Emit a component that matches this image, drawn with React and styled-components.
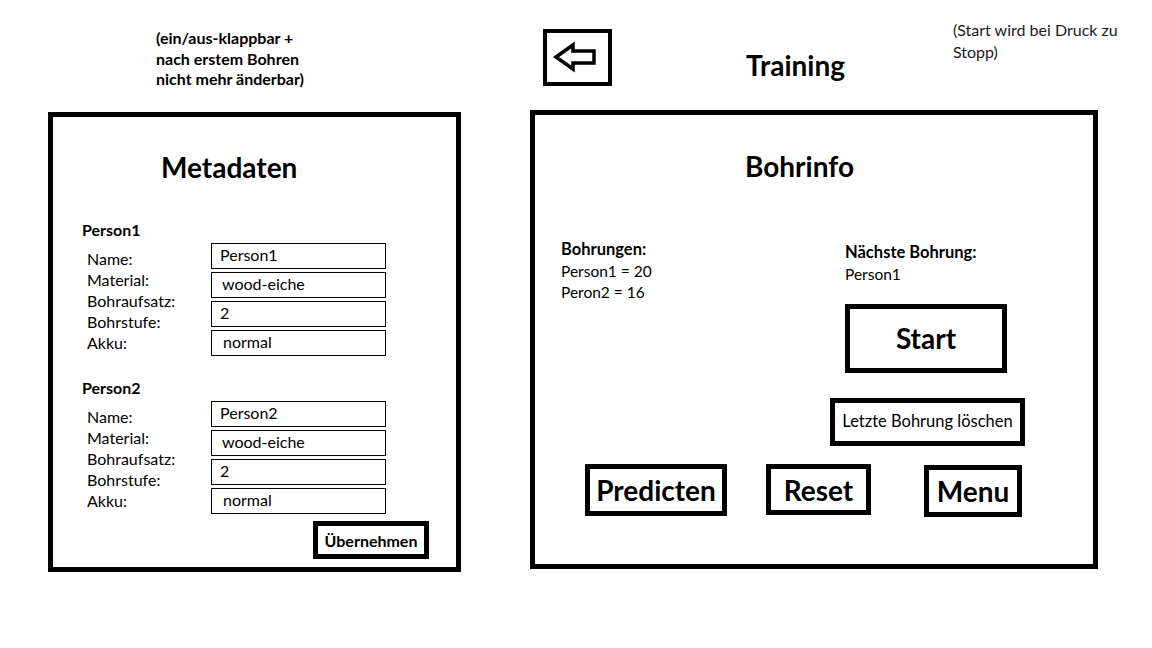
import React from 'react'
import styled, { createGlobalStyle } from 'styled-components'

const GlobalStyle = createGlobalStyle`
    html, body {
        margin: 0;
        padding: 0;
        background: #fff;
    }
    body {
        font-family: Lato, "Open Sans", "Liberation Sans", sans-serif;
        color: #000;
    }
`

const persons = [
    { name: 'Person1', fields: [{ v: 'Person1', x: 8 }, { v: 'wood-eiche', x: 10 }, { v: '2', x: 8 }, { v: 'normal', x: 11 }] },
    { name: 'Person2', fields: [{ v: 'Person2', x: 8 }, { v: 'wood-eiche', x: 10 }, { v: '2', x: 8 }, { v: 'normal', x: 11 }] },
]

const labels = ['Name:', 'Material:', 'Bohraufsatz:', 'Bohrstufe:', 'Akku:']

function BackArrow() {
    return (
        <svg width="61" height="49" viewBox="0 0 61 49">
            <polygon
                points="9,24 26,12 26,18 47,18 47,30 26,30 26,36"
                fill="none"
                stroke="#000"
                strokeWidth="3.5"
                strokeLinejoin="miter"
            />
        </svg>
    )
}

function PersonBlock({ person, first }) {
    return (
        <Person first={first}>
            <PersonName>{person.name}</PersonName>
            <FieldGrid>
                <Labels>
                    {labels.map(l => <div key={l}>{l}</div>)}
                </Labels>
                <Fields>
                    {person.fields.map((f, i) => (
                        <Field key={i} $pad={f.x}>{f.v}</Field>
                    ))}
                </Fields>
            </FieldGrid>
        </Person>
    )
}

export default function App() {
    return (
        <Page>
            <GlobalStyle />
            <LeftColumn>
                <LeftHeader>
                    <BoldNote>
                        (ein/aus-klappbar +<br />
                        nach erstem Bohren<br />
                        nicht mehr änderbar)
                    </BoldNote>
                </LeftHeader>
                <Panel $height={460}>
                    <PanelTitle $left={108} $top={33}>Metadaten</PanelTitle>
                    {persons.map((p, i) => (
                        <PersonBlock key={p.name} person={p} first={i === 0} />
                    ))}
                    <ApplyRow>
                        <ApplyButton>Übernehmen</ApplyButton>
                    </ApplyRow>
                </Panel>
            </LeftColumn>

            <RightColumn>
                <RightHeader>
                    <BackButton><BackArrow /></BackButton>
                    <PageTitle>Training</PageTitle>
                    <Note>
                        (Start wird bei Druck zu<br />
                        Stopp)
                    </Note>
                </RightHeader>
                <Panel $height={459}>
                    <PanelTitle $left={210} $top={34}>Bohrinfo</PanelTitle>
                    <InfoRow>
                        <InfoBlock>
                            <InfoHead>Bohrungen:</InfoHead>
                            <div>Person1 = 20</div>
                            <div>Peron2 = 16</div>
                        </InfoBlock>
                        <ActionColumn>
                            <NextInfo>
                                <InfoHead>Nächste Bohrung:</InfoHead>
                                <div>Person1</div>
                            </NextInfo>
                            <StartButton>Start</StartButton>
                            <DeleteButton>Letzte Bohrung löschen</DeleteButton>
                        </ActionColumn>
                    </InfoRow>
                    <ButtonRow>
                        <BigButton $w={142} $h={52} $ml={50}>Predicten</BigButton>
                        <BigButton $w={105} $h={51} $ml={39}>Reset</BigButton>
                        <BigButton $w={98} $h={52} $ml={53} $mt={1}>Menu</BigButton>
                    </ButtonRow>
                </Panel>
            </RightColumn>
        </Page>
    )
}

const Page = styled.div`
    width: 1152px;
    height: 648px;
    display: flex;
    align-items: flex-start;
    overflow: hidden;
`

const LeftColumn = styled.div`
    margin-left: 48px;
    width: 413px;
    flex-shrink: 0;
    display: flex;
    flex-direction: column;
`

const LeftHeader = styled.div`
    height: 112px;
    box-sizing: border-box;
    padding: 28px 0 0 108px;
`

const BoldNote = styled.div`
    font-weight: 700;
    font-size: 16px;
    line-height: 20.5px;
`

const Panel = styled.div`
    box-sizing: border-box;
    height: ${p => p.$height}px;
    border: 5px solid #000;
    display: flex;
    flex-direction: column;
`

const PanelTitle = styled.h1`
    margin: ${p => p.$top}px 0 0 ${p => p.$left}px;
    font-size: 28px;
    line-height: 34px;
    font-weight: 700;
`

const Person = styled.div`
    margin-top: ${p => (p.first ? 36 : 22)}px;
    padding-left: 29px;
`

const PersonName = styled.div`
    font-weight: 700;
    font-size: 16px;
    line-height: 20px;
`

const FieldGrid = styled.div`
    margin-top: 3px;
    display: grid;
    grid-template-columns: 124px 175px;
    padding-left: 5px;
`

const Labels = styled.div`
    padding-top: 5px;
    font-size: 16px;
    line-height: 21px;
`

const Fields = styled.div`
    display: flex;
    flex-direction: column;
    gap: 3px;
`

const Field = styled.div`
    box-sizing: border-box;
    height: 26px;
    border: 1px solid #000;
    padding-left: ${p => p.$pad}px;
    font-size: 16px;
    line-height: 22px;
`

const ApplyRow = styled.div`
    display: flex;
    justify-content: flex-end;
    margin-top: 7px;
    padding-right: 27px;
`

const ApplyButton = styled.div`
    box-sizing: border-box;
    width: 116px;
    height: 38px;
    border: 5px solid #000;
    display: flex;
    align-items: center;
    justify-content: center;
    font-weight: 700;
    font-size: 16px;
`

const RightColumn = styled.div`
    margin-left: 69px;
    width: 568px;
    flex-shrink: 0;
    display: flex;
    flex-direction: column;
`

const RightHeader = styled.div`
    height: 110px;
    display: flex;
    align-items: flex-start;
`

const BackButton = styled.div`
    box-sizing: border-box;
    flex-shrink: 0;
    margin: 29px 0 0 13px;
    width: 69px;
    height: 57px;
    border: 4px solid #000;
    display: flex;
`

const PageTitle = styled.div`
    flex-shrink: 0;
    margin: 48px 0 0 134px;
    width: 207px;
    font-size: 28px;
    line-height: 34px;
    font-weight: 700;
`

const Note = styled.div`
    flex-shrink: 0;
    white-space: nowrap;
    margin-top: 19px;
    font-size: 16px;
    line-height: 22px;
    color: #1a1a1a;
`

const InfoRow = styled.div`
    margin-top: 56px;
    display: grid;
    grid-template-columns: 269px 1fr;
    padding-left: 26px;
    font-size: 15.5px;
    line-height: 21.5px;
`

const InfoBlock = styled.div``

const InfoHead = styled.div`
    font-weight: 700;
    font-size: 16.5px;
`

const ActionColumn = styled.div`
    display: flex;
    flex-direction: column;
    align-items: flex-start;
`

const NextInfo = styled.div`
    margin: 3px 0 0 15px;
`

const StartButton = styled.div`
    box-sizing: border-box;
    margin: 19px 0 0 15px;
    width: 162px;
    height: 69px;
    border: 5px solid #000;
    display: flex;
    align-items: center;
    justify-content: center;
    font-weight: 700;
    font-size: 28px;
`

const DeleteButton = styled.div`
    box-sizing: border-box;
    margin-top: 25px;
    width: 195px;
    height: 48px;
    border: 5px solid #000;
    display: flex;
    align-items: center;
    justify-content: center;
    font-size: 16.5px;
`

const ButtonRow = styled.div`
    margin-top: 18px;
    display: flex;
    align-items: flex-start;
`

const BigButton = styled.div`
    box-sizing: border-box;
    margin: ${p => p.$mt || 0}px 0 0 ${p => p.$ml}px;
    width: ${p => p.$w}px;
    height: ${p => p.$h}px;
    border: 5px solid #000;
    display: flex;
    align-items: center;
    justify-content: center;
    font-weight: 700;
    font-size: 28px;
`
